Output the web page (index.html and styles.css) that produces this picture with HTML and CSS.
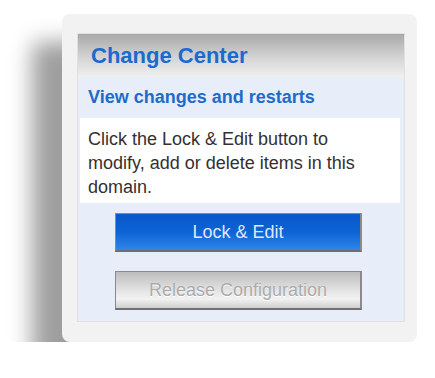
FILE: index.html
```html
<!DOCTYPE html>
<html lang="en">

<head>
    <meta charset="UTF-8">
    <title>Change Center</title>
    <link rel="stylesheet" href="styles.css">
</head>

<body>
    <div class="frame">
        <div class="panel">
            <div class="panel-title">Change Center</div>
            <div class="panel-link">View changes and restarts</div>

            <div class="panel-text">
                Click the Lock &amp; Edit button to modify, add or delete items in this domain.
            </div>

            <!-- Actions -->
            <div class="button-group">
                <button type="button" class="btn-primary">Lock &amp; Edit</button>
                <button type="button" class="btn-disabled" disabled>Release Configuration</button>
            </div>
        </div>
    </div>
</body>

</html>
```

FILE: styles.css
```css
body {
    font-family: "Liberation Sans", Arial, sans-serif;
    background: #ffffff;
    margin: 0;
}

.frame {
    width: 355px;
    height: 328px;
    margin: 14px 0 0 62px;
    padding: 19px 12px 20px 15px;
    box-sizing: border-box;
    background: #f2f2f2;
    border-radius: 8px;
    box-shadow: -30px 28px 22px rgba(0, 0, 0, 0.38);
}

.panel {
    height: 100%;
    background: #e7eefa;
    border: 1px solid #e0e0e0;
    box-sizing: border-box;
}

.panel-title {
    height: 43px;
    line-height: 43px;
    padding-left: 13px;
    font-size: 22px;
    font-weight: bold;
    color: #1b6ad0;
    background: linear-gradient(180deg, #a9a9a9 0%, #d4d4d4 55%, #f0f0f0 100%);
}

.panel-link {
    height: 41px;
    line-height: 41px;
    padding-left: 10px;
    font-size: 18px;
    font-weight: bold;
    color: #1e6bcc;
}

.panel-text {
    height: 85px;
    margin: 0 4px 0 2px;
    padding: 9px 20px 0 8px;
    box-sizing: border-box;
    background: #ffffff;
    font-size: 18px;
    line-height: 24px;
    color: #35302f;
}

.button-group {
    display: flex;
    flex-direction: column;
    gap: 19px;
    padding: 10px 0 0 37px;
}

button {
    width: 247px;
    height: 39px;
    font-family: inherit;
    font-size: 18px;
    border: 1px solid #8a8a8a;
    border-bottom: 2px solid #6f6f6f;
    border-right: 2px solid #8a8a8a;
    padding: 0;
    cursor: pointer;
}

.btn-primary {
    background: linear-gradient(180deg, #0758c9 0%, #0d63d6 50%, #2f86e6 100%);
    color: #dfe8f4;
}

.btn-disabled {
    background: linear-gradient(180deg, #bdbdbd 0%, #e6e6e6 55%, #f2f2f2 75%, #cfcfcf 100%);
    color: #ababab;
    text-shadow: 0 1px 0 #ffffff;
    cursor: default;
}
```
